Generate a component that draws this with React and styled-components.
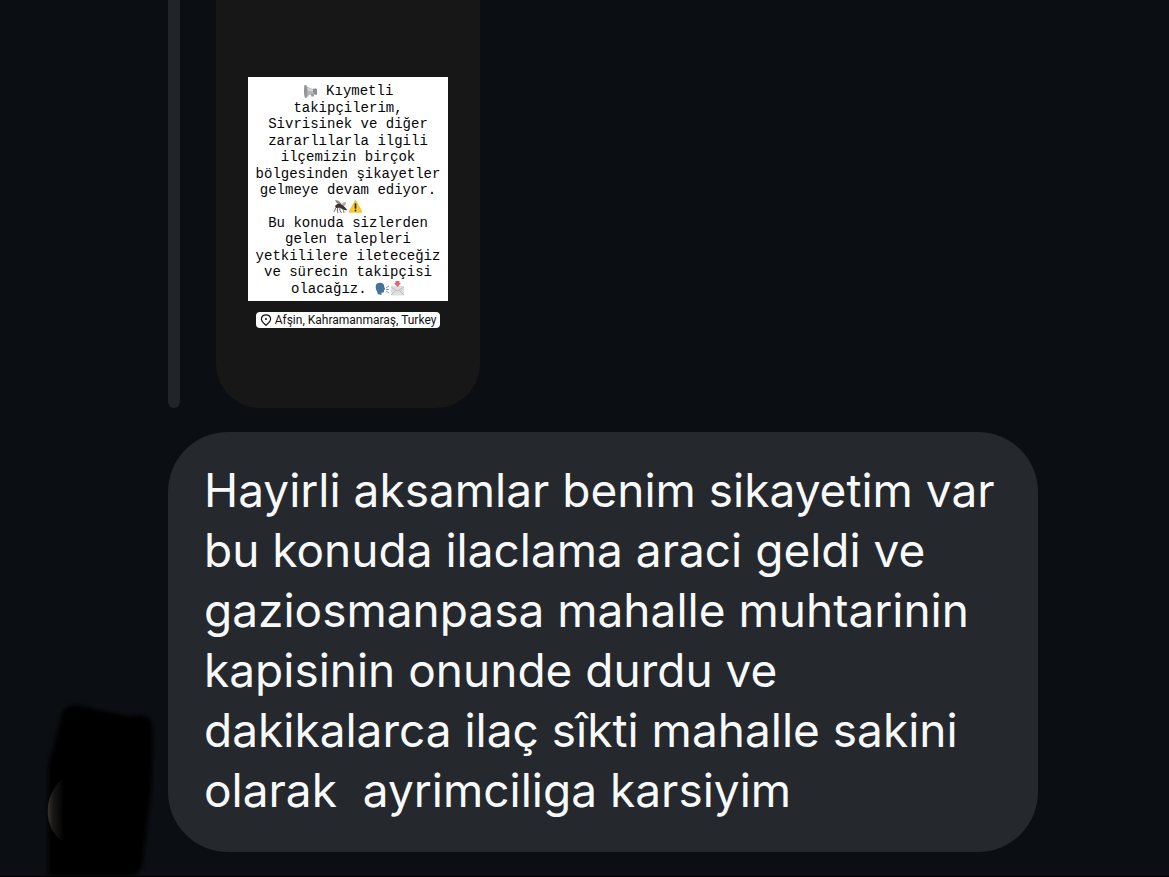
import React from "react";
import styled, { createGlobalStyle } from "styled-components";

const GlobalStyle = createGlobalStyle`
  * { box-sizing: border-box; }
  body { margin: 0; background: #0b0e13; }
`;

const Thread = styled.main`
  display: flex;
  flex-direction: column;
  gap: 24px;
  min-height: 100vh;
  background: #0b0e13;
  border-bottom: 1px solid #000;
  overflow: hidden;
`;

const QuotedStory = styled.section`
  display: flex;
  gap: 36px;
  padding-left: 168px;
`;

const QuoteBar = styled.div`
  width: 12px;
  border-radius: 0 0 6px 6px;
  background: #212429;
`;

const StoryCard = styled.article`
  display: flex;
  flex-direction: column;
  align-items: center;
  gap: 11px;
  width: 264px;
  padding: 77px 32px 80px;
  border-radius: 0 0 44px 44px;
  background: #171717;
`;

const StoryNote = styled.p`
  display: grid;
  grid-auto-rows: 1fr;
  align-items: center;
  width: 100%;
  height: 224px;
  margin: 0;
  padding: 6px 0 4px;
  background: #fff;
  color: #050505;
  font: 14px/16px "Liberation Mono", monospace;
  text-align: center;
  white-space: pre;
`;

const NoteLine = styled.span`
  display: flex;
  align-items: center;
  justify-content: center;
`;

const Emoji = styled.svg`
  flex: none;
  width: 15px;
  height: 15px;
`;

const LocationTag = styled.a`
  display: flex;
  align-items: center;
  gap: 3px;
  height: 16px;
  padding: 0 4px;
  border-radius: 4px;
  background: #fff;
  color: #111;
  font: 12px/16px Roboto, sans-serif;
  white-space: nowrap;
  text-decoration: none;
`;

const PinIcon = styled.svg`
  width: 12px;
  height: 12px;
`;

const MessageRow = styled.section`
  display: flex;
  align-items: flex-end;
`;

const Avatar = styled.svg`
  flex: none;
  width: 168px;
  height: 180px;
`;

const Bubble = styled.p`
  flex: 0 1 870px;
  margin: 0 24px 24px 0;
  padding: 28px 36px 32px;
  border-radius: 60px;
  background: #25282d;
  color: #f8f9fb;
  font: 46px/60px Inter, sans-serif;
  white-space: pre-wrap;
`;

const Megaphone = () => (
  <Emoji viewBox="0 0 15 15" aria-hidden="true">
    <path d="M1.5 1.2 Q3 .6 4 2 Q6.5 5 10.5 5.2 L10.8 9.8 Q6.5 10 4.2 13 Q3 14.4 1.8 13.6 Q.2 7 1.5 1.2Z" fill="#b5b7b8" />
    <path d="M1.5 1.2 Q3 .6 3.8 3 Q5 8 3.8 12.8 Q3 14.4 1.8 13.6 Q.2 7 1.5 1.2Z" fill="#929496" />
    <path d="M4.4 3.4 Q7 5.8 10.5 6 V7 Q7 7.2 5 6.6Z" fill="#dcddde" />
    <path d="M10 4.8 Q13.8 4 14 5.2 V10.4 Q13.6 11 10.4 10.2Z" fill="#8a8c8e" />
    <path d="M7.5 10 L10.8 9.8 L11 12.6 L8.4 12.6Z" fill="#9a9c9e" />
  </Emoji>
);

const Mosquito = () => (
  <Emoji viewBox="0 0 15 15" aria-hidden="true">
    <path d="M6.5 6 Q3 4 2 1 Q6 1 8.5 5Z" fill="#8d8880" />
    <path d="M8 5.5 Q10 2.5 13 3 Q13.5 6 10 7.5Z" fill="#b5b0a7" />
    <path d="M2 7 Q4 4.2 7.5 5 Q11 6.5 14 10.5 L13.2 11.6 Q9.5 10.5 7 8.8 L3 9Z" fill="#39342f" />
    <path d="M3 8.5 L1 13 M5 8.5 L4.2 11 L5 14 M7 8.5 L6.8 11 L8.4 14 M9 9 L10.6 11.5 L11 14" fill="none" stroke="#4b443d" strokeWidth=".8" />
  </Emoji>
);

const Warning = () => (
  <Emoji viewBox="0 0 15 15" aria-hidden="true">
    <path d="M7.5 2 L13.5 13 L1.5 13Z" fill="#fbcf38" stroke="#f6c52e" strokeWidth="1.6" strokeLinejoin="round" />
    <path d="M7.5 5 V9" stroke="#292314" strokeWidth="1.7" strokeLinecap="round" />
    <circle cx="7.5" cy="11.5" r=".9" fill="#292314" />
  </Emoji>
);

const SpeakingHead = () => (
  <Emoji viewBox="0 0 15 15" aria-hidden="true">
    <path d="M2.5 13 Q3 11 1.2 9 Q-.8 2 5 1.8 Q9.5 2 9.2 6 L10.2 8 L9.2 9 L9 11 Q8 12 6.5 11.5 L6.5 14Z" fill="#45749a" />
    <path d="M11 7 L14 5 M11 8.5 H14 M11 10 L14 12" stroke="#829cb1" strokeWidth="1" />
  </Emoji>
);

const Envelope = () => (
  <Emoji viewBox="0 0 15 15" aria-hidden="true">
    <rect x="1" y="5" width="13" height="9.5" rx="1" fill="#dedfe1" />
    <path d="M1 6 L7.5 10 L14 6 M1 14 L6 9 M14 14 L9 9" fill="none" stroke="#b4b6b9" strokeWidth=".8" />
    <path d="M5.5 0 H9.5 V2 H11 L7.5 6 L4 2 H5.5Z" fill="#e0666c" />
  </Emoji>
);

const noteLines = [
  <><Megaphone /> Kıymetli</>,
  "takipçilerim,",
  "Sivrisinek ve diğer",
  "zararlılarla ilgili",
  "ilçemizin birçok",
  "bölgesinden şikayetler",
  "gelmeye devam ediyor.",
  <><Mosquito /><Warning /></>,
  "Bu konuda sizlerden",
  "gelen talepleri",
  "yetkililere ileteceğiz",
  "ve sürecin takipçisi",
  <>olacağız. <SpeakingHead /><Envelope /></>,
];

export default function App() {
  return (
    <>
      <GlobalStyle />
      <Thread>
        <QuotedStory>
          <QuoteBar />
          <StoryCard>
            <StoryNote>
              {noteLines.map((line, i) => (
                <NoteLine key={i}>{line}</NoteLine>
              ))}
            </StoryNote>
            <LocationTag href="#location">
              <PinIcon viewBox="0 0 12 12" aria-hidden="true">
                <path d="M6 .8 C3.2 .8 1.4 2.7 1.4 5.1 C1.4 7.7 3.6 9.2 6 11.3 C8.4 9.2 10.6 7.7 10.6 5.1 C10.6 2.7 8.8 .8 6 .8Z" fill="none" stroke="#111" strokeWidth="1.2" />
                <circle cx="6" cy="5.1" r="1" fill="#111" />
              </PinIcon>
              Afşin, Kahramanmaraş, Turkey
            </LocationTag>
          </StoryCard>
        </QuotedStory>
        <MessageRow>
          <Avatar viewBox="0 0 168 180" aria-hidden="true">
            <defs>
              <filter id="soft" x="-10%" y="-10%" width="120%" height="120%">
                <feGaussianBlur stdDeviation="2" />
              </filter>
              <linearGradient id="rim" gradientUnits="userSpaceOnUse" x1="48" y1="0" x2="64" y2="0">
                <stop offset="0" stopColor="#35312e" />
                <stop offset=".3" stopColor="#1a1817" />
                <stop offset="1" stopColor="#000" />
              </linearGradient>
            </defs>
            <path d="M62 18 Q66 8 76 9 L128 20 L141 19 Q153 20 153 36 L152 90 L143 165 Q142 178 130 180 L48 180 L48 70Z" fill="#000" filter="url(#soft)" />
            <path d="M66 80 C42 96 42 134 64 146 Q60 114 66 80Z" fill="url(#rim)" />
          </Avatar>
          <Bubble>
            {"Hayirli aksamlar benim sikayetim var bu konuda ilaclama araci geldi ve gaziosmanpasa mahalle muhtarinin kapisinin onunde durdu ve dakikalarca ilaç sîkti mahalle sakini olarak  ayrimciliga karsiyim"}
          </Bubble>
        </MessageRow>
      </Thread>
    </>
  );
}
